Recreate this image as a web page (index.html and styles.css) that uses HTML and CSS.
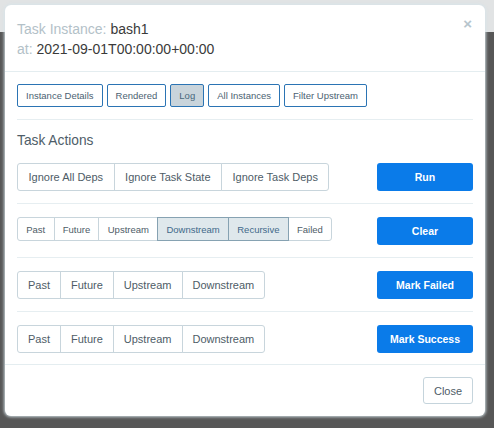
FILE: index.html
```html
<!DOCTYPE html>
<html>
<head>
<meta charset="utf-8">
<link rel="stylesheet" href="styles.css">
</head>
<body>
<div class="modal">
  <div class="modal-header">
    <div class="title">
      <div class="line"><span class="label">Task Instance: </span><span class="value">bash1</span></div>
      <div class="line"><span class="label">at: </span><span class="value">2021-09-01T00:00:00+00:00</span></div>
    </div>
    <button class="close-x">×</button>
  </div>
  <div class="modal-body">
    <div class="tabs">
      <button class="tab">Instance Details</button>
      <button class="tab">Rendered</button>
      <button class="tab active">Log</button>
      <button class="tab">All Instances</button>
      <button class="tab">Filter Upstream</button>
    </div>
    <hr class="sep">
    <h4 class="section-title">Task Actions</h4>
    <div class="action-row">
      <div class="group wide">
        <button class="seg">Ignore All Deps</button>
        <button class="seg">Ignore Task State</button>
        <button class="seg">Ignore Task Deps</button>
      </div>
      <button class="primary">Run</button>
    </div>
    <hr class="sep">
    <div class="action-row">
      <div class="group small">
        <button class="seg">Past</button>
        <button class="seg">Future</button>
        <button class="seg">Upstream</button>
        <button class="seg on">Downstream</button>
        <button class="seg on">Recursive</button>
        <button class="seg">Failed</button>
      </div>
      <button class="primary">Clear</button>
    </div>
    <hr class="sep">
    <div class="action-row">
      <div class="group">
        <button class="seg">Past</button>
        <button class="seg">Future</button>
        <button class="seg">Upstream</button>
        <button class="seg">Downstream</button>
      </div>
      <button class="primary">Mark Failed</button>
    </div>
    <hr class="sep">
    <div class="action-row">
      <div class="group">
        <button class="seg">Past</button>
        <button class="seg">Future</button>
        <button class="seg">Upstream</button>
        <button class="seg">Downstream</button>
      </div>
      <button class="primary">Mark Success</button>
    </div>
  </div>
  <div class="modal-footer">
    <button class="btn-close">Close</button>
  </div>
</div>
</body>
</html>
```

FILE: styles.css
```css
html, body {
  margin: 0;
  padding: 0;
}
body {
  width: 494px;
  height: 428px;
  overflow: hidden;
  background: linear-gradient(to bottom, #e1e3e4 0, #e1e3e4 32px, #575757 32px, #575757 100%);
  font-family: "Liberation Sans", Arial, sans-serif;
  color: #4d5c66;
}
button {
  font-family: "Liberation Sans", Arial, sans-serif;
  margin: 0;
  cursor: pointer;
}
.modal {
  margin: 5px 0 0 5px;
  width: 480px;
  height: 411px;
  background: #fff;
  border-radius: 6px;
  box-shadow: 0 0 3px 1px rgba(215, 228, 234, 0.9);
  display: flex;
  flex-direction: column;
  box-sizing: border-box;
}
.modal-header {
  display: flex;
  justify-content: space-between;
  align-items: flex-start;
  padding: 14px 12px 12px 12px;
  border-bottom: 1px solid #e4edf0;
}
.line {
  font-size: 14px;
  line-height: 20px;
  height: 20px;
}
.label {
  color: #b3c1c8;
}
.value {
  color: #3a3a3a;
}
.close-x {
  border: none;
  background: none;
  padding: 0;
  margin: -3px 1px 0 0;
  font-size: 15px;
  line-height: 16px;
  font-weight: bold;
  color: #b6c5cd;
}
.modal-body {
  padding: 12px 12px 11px 12px;
  flex: 1;
}
.tabs {
  display: flex;
  gap: 4px;
}
.tab {
  height: 23px;
  padding: 0 8px;
  border: 1px solid #2b74b4;
  border-radius: 2px;
  background: #fff;
  color: #4c6272;
  font-size: 9.5px;
}
.tab.active {
  background: #c9d4db;
  color: #47677c;
}
.sep {
  border: 0;
  border-top: 1px solid #e6eef1;
  margin: 12px 0 13px 0;
  height: 0;
}
.section-title {
  margin: -2px 0 12px 0;
  font-size: 13.75px;
  font-weight: normal;
  line-height: 20px;
  color: #4e5d68;
}
.action-row {
  display: flex;
  justify-content: space-between;
  align-items: flex-start;
}
.group {
  display: flex;
}
.seg {
  height: 28px;
  padding: 0 10px;
  border: 1px solid #c8d5dc;
  background: #fff;
  color: #4e5c67;
  font-size: 11px;
  margin-left: -1px;
}
.seg:first-child {
  margin-left: 0;
  border-radius: 3px 0 0 3px;
}
.seg:last-child {
  border-radius: 0 3px 3px 0;
}
.group.wide .seg {
  padding: 0 10.5px;
}
.group.small .seg {
  height: 24px;
  padding: 0 8.25px;
  font-size: 9.5px;
}
.seg.on {
  background: #dfe8ec;
  border-color: #86a2b2;
  color: #41698a;
  position: relative;
}
.primary {
  width: 96px;
  height: 28px;
  border: none;
  border-radius: 3px;
  background: #0a7be9;
  color: #fff;
  font-weight: bold;
  font-size: 10.5px;
}
.modal-footer {
  border-top: 1px solid #e4edf0;
  padding: 12px 12px 12px 12px;
  display: flex;
  justify-content: flex-end;
}
.btn-close {
  width: 50px;
  height: 27px;
  border: 1px solid #c5d4dc;
  border-radius: 3px;
  background: #fff;
  color: #4e5c67;
  font-size: 11px;
}
```
